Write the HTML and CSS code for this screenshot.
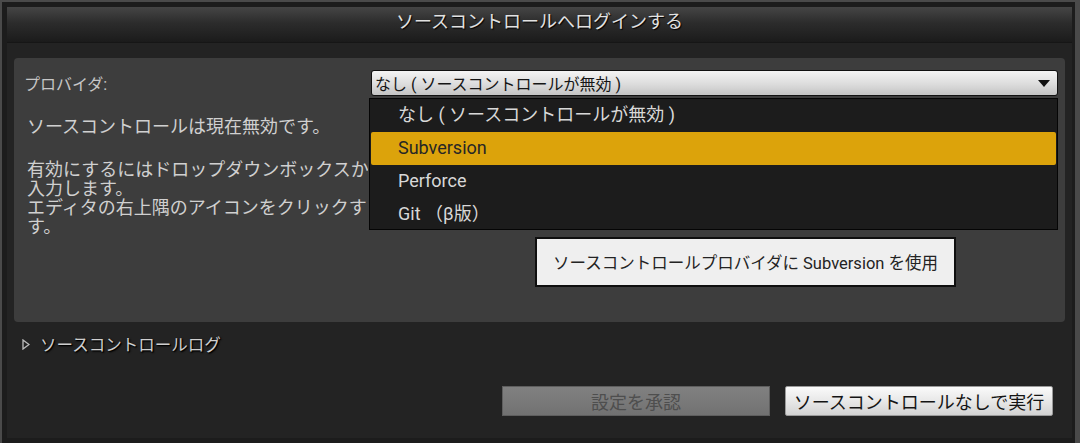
FILE: index.html
```html
<!DOCTYPE html>
<html lang="ja">
<head>
    <meta charset="UTF-8">
    <title>ソースコントロールへログインする</title>
    <link rel="stylesheet" href="styles.css">
</head>
<body>
<div class="window">
    <div class="titlebar">ソースコントロールへログインする</div>
    <div class="content">
        <div class="panel">
            <div class="row">
                <div class="label">プロバイダ:</div>
                <div class="combo">
                    <span class="combo-text">なし ( ソースコントロールが無効 )</span>
                    <svg class="combo-arrow" width="12" height="7" viewBox="0 0 12 7"><polygon points="0,0 12,0 6,7" fill="#111"/></svg>
                    <ul class="menu">
                        <li>なし ( ソースコントロールが無効 )</li>
                        <li class="active">Subversion</li>
                        <li>Perforce</li>
                        <li>Git （β版）</li>
                    </ul>
                </div>
            </div>
            <div class="info">
                <p>ソースコントロールは現在無効です。</p>
                <p>
                    <span>有効にするにはドロップダウンボックスか</span>
                    <span>入力します。</span>
                    <span>エディタの右上隅のアイコンをクリックす</span>
                    <span>す。</span>
                </p>
            </div>
            <button class="use-btn" type="button">ソースコントロールプロバイダに Subversion を使用</button>
        </div>
        <div class="log">
            <svg width="8" height="11" viewBox="0 0 8 11"><polygon points="1,1 7,5.5 1,10" fill="none" stroke="#bdbdbd" stroke-width="1.3"/></svg>
            <span>ソースコントロールログ</span>
        </div>
        <div class="actions">
            <button class="btn disabled" type="button">設定を承認</button>
            <button class="btn" type="button">ソースコントロールなしで実行</button>
        </div>
    </div>
</div>
</body>
</html>
```

FILE: styles.css
```css
* {
    box-sizing: border-box;
}
body {
    margin: 0;
    width: 1080px;
    height: 443px;
    overflow: hidden;
    background-color: #4a4a4a;
    font-family: Roboto, "Noto Sans CJK JP", sans-serif;
}
.window {
    margin: 2px 5px 0 2px;
    height: 441px;
    padding: 5px 3px 5px 5px;
    background-color: #1c1c1c;
}
.titlebar {
    height: 36px;
    line-height: 30px;
    text-align: center;
    font-size: 18px;
    color: #e2e2e2;
    text-shadow: 1px 1px 1px #000;
    background: linear-gradient(#454545, #2c2c2c 45%, #1b1b1b);
    border-bottom: 1px solid #161616;
}
.content {
    height: 395px;
    padding: 15px 7px 0 7px;
    background-color: #232323;
}
.panel {
    height: 264px;
    padding: 12px 7px 0 10px;
    background-color: #3d3d3d;
    border-radius: 4px;
}
.row {
    display: flex;
    align-items: center;
    height: 26px;
}
.label {
    width: 347px;
    font-size: 16px;
    color: #c6c6c6;
}
.combo {
    position: relative;
    flex: 1;
    height: 26px;
    display: flex;
    align-items: center;
    padding: 0 6px 0 3px;
    background: linear-gradient(#f4f4f4, #dcdcdc 55%, #c4c4c4);
    border: 1px solid #111;
    border-radius: 3px;
}
.combo-text {
    flex: 1;
    font-size: 16px;
    color: #151515;
}
.combo-arrow {
    margin-right: 1px;
}
.menu {
    position: absolute;
    top: 27px;
    left: -3px;
    right: -1px;
    height: 132px;
    margin: 0;
    padding: 0;
    list-style: none;
    background-color: #1c1c1c;
    border: 1px solid #050505;
}
.menu li {
    height: 33px;
    line-height: 32px;
    padding-left: 28px;
    font-size: 18px;
    color: #d8d8d8;
}
.menu li.active {
    margin: 0 1px;
    padding-left: 27px;
    background-color: #dca30b;
    border-radius: 2px;
    color: #262626;
}
.info {
    width: 344px;
    overflow: hidden;
    margin-top: 21px;
    padding-left: 3px;
    font-size: 18px;
    line-height: 19px;
    color: #d0d0d0;
    white-space: nowrap;
}
.info p {
    margin: 0;
}
.info p:first-child {
    margin-bottom: 24px;
}
.info span {
    display: block;
}
.use-btn {
    display: block;
    margin: 1px 0 0 511px;
    width: 421px;
    height: 50px;
    padding: 0;
    font-family: Roboto, "Noto Sans CJK JP", sans-serif;
    font-size: 16.5px;
    color: #232323;
    background-color: #efefef;
    border: 2px solid #0f0f0f;
}
.log {
    display: flex;
    align-items: center;
    gap: 10px;
    margin-top: 13px;
    padding-left: 8px;
    height: 18px;
    font-size: 16.5px;
    color: #cfcfcf;
    text-shadow: 1px 1px 1px #000, 1px 1px 2px #000;
}
.actions {
    display: flex;
    justify-content: flex-end;
    gap: 15px;
    margin-top: 33px;
    padding-right: 12px;
}
.btn {
    width: 268px;
    height: 30px;
    padding: 0;
    font-family: Roboto, "Noto Sans CJK JP", sans-serif;
    font-size: 18px;
    color: #141414;
    background: linear-gradient(#fafafa, #e4e4e4 60%, #d2d2d2);
    border: 1px solid #9a9a9a;
    border-radius: 2px;
}
.btn.disabled {
    color: #4e4e4e;
    background: linear-gradient(#808080, #787878 60%, #717171);
    border: 1px solid #5e5e5e;
    border-radius: 0;
}
```
